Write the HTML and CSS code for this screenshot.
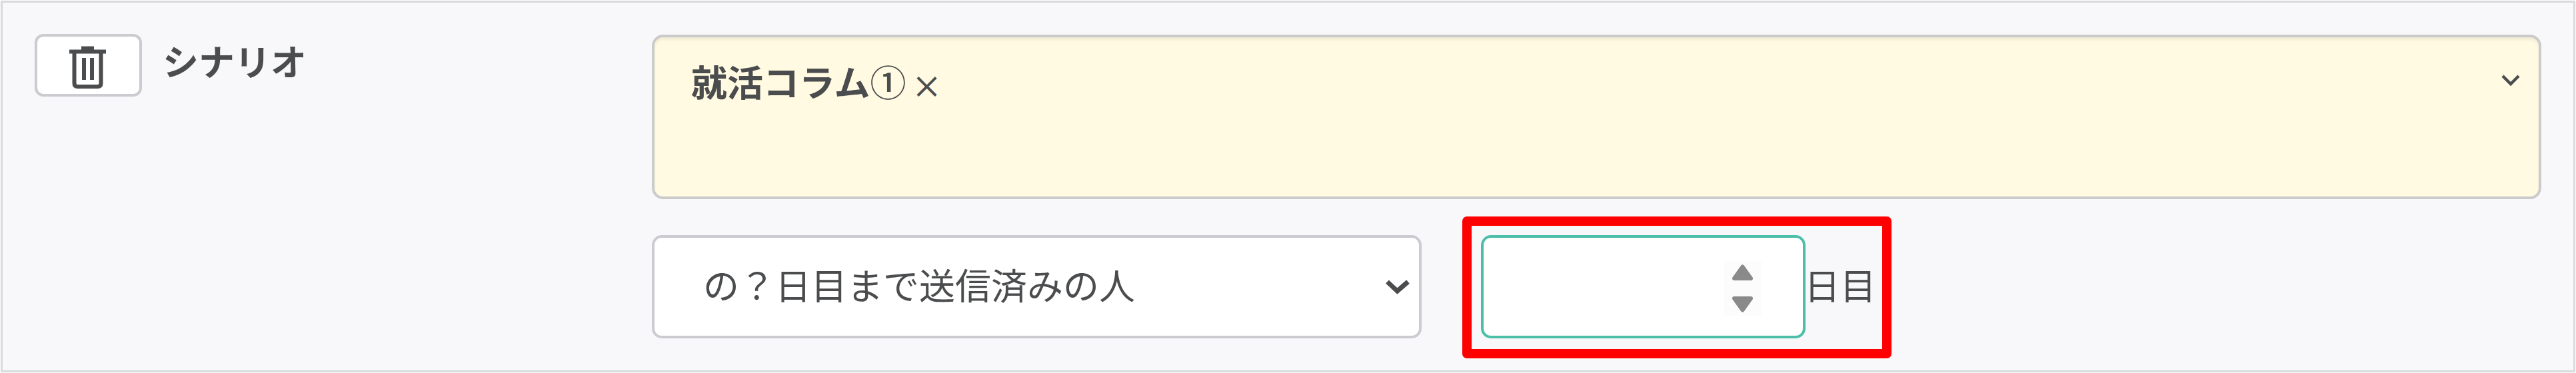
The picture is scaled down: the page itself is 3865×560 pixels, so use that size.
FILE: index.html
```html
<!DOCTYPE html>
<html lang="ja">
<head>
    <meta charset="UTF-8">
    <title>シナリオ</title>
    <link rel="stylesheet" href="styles.css">
</head>
<body>

    <div class="condition">
        <div class="condition-head">
            <button type="button" class="delete-btn">
                <svg width="55" height="65" viewBox="0 0 55 65" fill="none" stroke="#4b4c4e">
                    <path d="M18 3.500h19" stroke-width="6"/>
                    <path d="M0 8.500h55" stroke-width="6"/>
                    <path d="M7.500 10v46q0 5 5 5h30q5 0 5-5V10" stroke-width="6"/>
                    <path d="M22 18v33M34 18v33" stroke-width="6"/>
                </svg>
            </button>
            <span class="label">シナリオ</span>
        </div>

        <div class="condition-body">
            <!-- Selected scenario -->
            <div class="scenario-box">
                <div class="tag">就活コラム<span class="num">①</span><span class="remove">×</span></div>
                <svg class="arrow" width="28" height="18" viewBox="0 0 28 18" fill="none" stroke="#4b4c4e" stroke-width="4.500">
                    <path d="M2 2l12 12L26 2"/>
                </svg>
            </div>

            <div class="row">
                <div class="select">
                    <span class="select-text">の？日目まで送信済みの人</span>
                    <svg width="36" height="22" viewBox="0 0 36 22" fill="none" stroke="#4b4c4e" stroke-width="7">
                        <path d="M2.500 3L17.500 17 33.500 3"/>
                    </svg>
                </div>

                <div class="highlight">
                    <div class="day-input">
                        <div class="spinner">
                            <svg width="31" height="72" viewBox="0 0 31 72" fill="#8a8a8a" stroke="#8a8a8a" stroke-width="6" stroke-linejoin="round">
                                <path d="M15.500 3.500L28 21H3z"/>
                                <path d="M15.500 68.500L28 51H3z"/>
                            </svg>
                        </div>
                    </div>
                    <span class="unit">日目</span>
                </div>
            </div>
        </div>
    </div>

</body>
</html>
```
FILE: styles.css
```css
* {
    box-sizing: border-box;
}

body {
    margin: 0;
    padding: 1px;
    height: 560px;
    background-color: #fcfcfc;
    color: #4b4c4e;
    font-family: "Noto Sans CJK JP", sans-serif;
    font-size: 54px;
    line-height: 80px;
}

svg {
    display: block;
}

.condition {
    display: flex;
    width: 3863px;
    height: 558px;
    padding: 48px;
    border: 3px solid #d9dada;
    background-color: #f8f8fb;
}

.condition-head {
    display: flex;
    align-items: flex-start;
    width: 926px;
}

.delete-btn {
    display: flex;
    justify-content: center;
    width: 161px;
    height: 94px;
    margin-top: -1px;
    padding: 14px 3px 0 0;
    border: 4px solid #cbcbd0;
    border-radius: 13px;
    background-color: #fff;
}

.label {
    margin: -1px 0 0 31px;
    font-weight: bold;
}

.condition-body {
    width: 2835px;
}

.scenario-box {
    display: flex;
    justify-content: space-between;
    height: 247px;
    padding: 26px 28px 0 55px;
    border: 4px solid #cbcbcb;
    border-radius: 17px;
    background-color: #fffae1;
    box-shadow: inset 0 4px 4px rgba(0, 0, 0, 0.06);
}

.tag {
    display: flex;
    font-weight: bold;
}

.num,
.remove {
    font-weight: 500;
}

.remove {
    margin: 5px 0 0 8px;
    font-size: 46px;
}

.arrow {
    margin-top: 30px;
}

.row {
    display: flex;
    margin-top: 26px;
}

.select {
    display: flex;
    justify-content: space-between;
    align-items: center;
    width: 1155px;
    height: 155px;
    margin-top: 28px;
    padding: 0 14px 0 73px;
    border: 4px solid #cbcbd0;
    border-radius: 15px;
    background-color: #fff;
}

.select-text {
    margin-bottom: 8px;
}

.highlight {
    display: flex;
    align-items: center;
    width: 644px;
    height: 213px;
    margin-left: 61px;
    padding-left: 14px;
    border: 14px solid #f00;
    border-radius: 7px;
}

.day-input {
    display: flex;
    justify-content: flex-end;
    align-items: center;
    width: 487px;
    height: 155px;
    margin-bottom: 2px;
    padding: 4px 62px 0 0;
    border: 4px solid #4bbfa7;
    border-radius: 15px;
    background-color: #fff;
}

.spinner {
    display: flex;
    justify-content: center;
    align-items: center;
    width: 57px;
    height: 82px;
    background-color: #fcfcfc;
}

.unit {
    margin: 0 0 10px -2px;
}
```
